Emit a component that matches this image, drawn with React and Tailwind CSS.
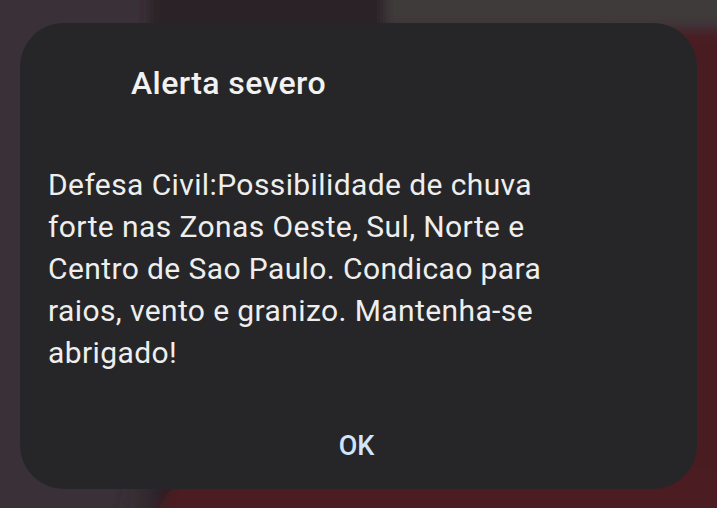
import React from 'react';

const Backdrop = () => (
    <svg className="absolute inset-0" width="717" height="508" viewBox="0 0 717 508">
        <defs>
            <filter id="soft" x="-10%" y="-10%" width="120%" height="120%">
                <feGaussianBlur stdDeviation="6" />
            </filter>
            <linearGradient id="shade" x1="0" y1="0" x2="1" y2="0">
                <stop offset="0" stopColor="#3a3037" stopOpacity="0" />
                <stop offset="1" stopColor="#1c1619" stopOpacity="0.9" />
            </linearGradient>
        </defs>
        <rect width="717" height="508" fill="#3a3037" />
        <g filter="url(#soft)">
            <rect x="150" y="-20" width="235" height="60" fill="#2a2126" />
            <rect x="385" y="-20" width="360" height="45" fill="#403b3b" />
            <rect x="600" y="30" width="140" height="500" fill="#4a1b21" />
            <polygon points="175,470 740,470 740,530 150,530" fill="#4b1a20" />
            <polygon points="130,480 175,480 150,530 110,530" fill="url(#shade)" />
        </g>
    </svg>
);

export default function App() {
    return (
        <div
            className="relative w-[717px] h-[508px] overflow-hidden"
            style={{ fontFamily: 'Roboto, "Noto Sans", sans-serif' }}
        >
            <Backdrop />

            <div className="relative pt-[23px] pl-[20px]">
                {/* Alert dialog */}
                <div className="w-[677px] h-[466px] rounded-[44px] bg-[#262628] flex flex-col">
                    <h2 className="pl-[111px] pt-[40px] text-[32px] leading-[40px] font-medium tracking-[0.4px] text-[#f2f2f2]">
                        Alerta severo
                    </h2>

                    <p className="mt-[61px] pl-[28px] pr-[10px] text-[30px] leading-[42px] tracking-[0.4px] text-[#eeeeee]">
                        Defesa Civil:Possibilidade de chuva<br />
                        forte nas Zonas Oeste, Sul, Norte e<br />
                        Centro de Sao Paulo. Condicao para<br />
                        raios, vento e granizo. Mantenha-se<br />
                        abrigado!
                    </p>

                    <div className="flex justify-center mt-[55px] pr-[4px]">
                        <button className="text-[27px] leading-[34px] font-medium text-[#d2e4fb]">OK</button>
                    </div>
                </div>
            </div>
        </div>
    );
}
